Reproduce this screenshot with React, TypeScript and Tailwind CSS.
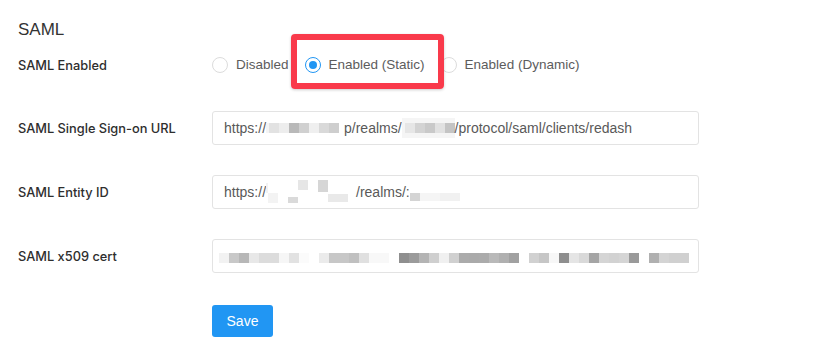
import React from "react";

type Block = { c: string };

// pixelated (redacted) parts of the field values
const urlMaskA: Block[] = [
  { c: "w-[3px] h-[10px] bg-[#f4f4f4]" },
  { c: "w-[10px] h-[10px] bg-[#e2e2e2]" },
  { c: "w-[10px] h-[10px] bg-[#ededed]" },
  { c: "w-[10px] h-[10px] bg-[#b9b9b9]" },
  { c: "w-[10px] h-[10px] bg-[#d0d0d0]" },
  { c: "w-[10px] h-[10px] bg-[#efefef]" },
  { c: "w-[10px] h-[10px] bg-[#d9d9d9]" },
  { c: "w-[10px] h-[10px] bg-[#cecece]" },
  { c: "w-[5px] h-[10px] bg-white" },
];

const urlMaskB: Block[] = [
  { c: "w-[3px] h-[10px] bg-[#f5f5f5]" },
  { c: "w-[10px] h-[10px] bg-[#e6e6e6]" },
  { c: "w-[10px] h-[10px] bg-[#d3d3d3]" },
  { c: "w-[10px] h-[10px] bg-[#c9c9c9]" },
  { c: "w-[10px] h-[10px] bg-[#e1e1e1]" },
  { c: "w-[10px] h-[10px] bg-[#c4c4c4]" },
];

const entityMaskA: Block[] = [
  { c: "w-[2px] h-[10px] mt-[4px] bg-[#f2f2f2]" },
  { c: "w-[10px] h-[10px] mt-[14px] bg-[#f3f3f3]" },
  { c: "w-[10px] h-[10px] bg-white" },
  { c: "w-[10px] h-[6px] mt-[18px] bg-[#dadada]" },
  { c: "w-[10px] h-[10px] mt-[1px] bg-[#e6e6e6]" },
  { c: "w-[10px] h-[10px] bg-white" },
  { c: "w-[10px] h-[12px] mt-[1px] bg-[#d6d6d6]" },
  { c: "w-[20px] h-[8px] mt-[15px] bg-[#e9e9e9]" },
  { c: "w-[8px] h-[10px] bg-white" },
];

const entityMaskB: Block[] = [
  { c: "w-[10px] h-[8px] mt-[14px] bg-[#d4d4d4]" },
  { c: "w-[20px] h-[8px] mt-[14px] bg-[#f5f5f5]" },
  { c: "w-[20px] h-[8px] mt-[14px] bg-[#f1f1f1]" },
];

const certMask: string[] = [
  "bg-[#f2f2f2]", "bg-[#c8c8c8]", "bg-[#b7b7b7]", "bg-[#e8e8e8]", "bg-[#dcdcdc]",
  "bg-[#dcdcdc]", "bg-[#f6f6f6]", "bg-[#e2e2e2]", "bg-[#fbfbfb]", "bg-white",
  "bg-[#ebebeb]", "bg-[#c7c7c7]", "bg-[#c7c7c7]", "bg-[#c0c0c0]", "bg-[#e0e0e0]",
  "bg-[#f8f8f8]", "bg-[#f8f8f8]", "bg-white", "bg-[#8f8f8f]", "bg-[#9b9b9b]",
  "bg-[#b4b4b4]", "bg-[#cfcfcf]", "bg-[#f0f0f0]", "bg-[#d0d0d0]", "bg-[#ababab]",
  "bg-[#aaaaaa]", "bg-[#ababab]", "bg-[#b9b9b9]", "bg-[#b0b0b0]", "bg-[#a1a1a1]",
  "bg-white", "bg-[#d1d1d1]", "bg-[#c6c6c6]", "bg-[#f7f7f7]", "bg-[#8e8e8e]",
  "bg-[#e5e5e5]", "bg-[#d9d9d9]", "bg-[#a5a5a5]", "bg-[#d5d5d5]", "bg-[#d2d2d2]",
  "bg-[#d5d5d5]", "bg-[#9a9a9a]", "bg-white", "bg-[#b0b0b0]", "bg-[#d4d4d4]",
  "bg-[#d0d0d0]", "bg-[#d0d0d0]",
];

function Mask({ blocks, className = "" }: { blocks: Block[]; className?: string }) {
  return (
    <span className={`inline-flex items-start shrink-0 ${className}`}>
      {blocks.map((b, i) => (
        <span key={i} className={`block shrink-0 ${b.c}`} />
      ))}
    </span>
  );
}

function Radio({ label, checked }: { label: string; checked?: boolean }) {
  return (
    <label className="flex items-center mr-[8px]">
      <span
        className={`w-4 h-4 rounded-full border bg-white flex items-center justify-center ${
          checked ? "border-[#2196f3]" : "border-[#dcdcdc]"
        }`}
      >
        {checked && <span className="w-2 h-2 rounded-full bg-[#2196f3]" />}
      </span>
      <span className="px-[8px] text-[13.5px] text-[#5c5c5c]">{label}</span>
    </label>
  );
}

function Row({ label, children, className = "" }: { label: string; children: React.ReactNode; className?: string }) {
  return (
    <div className={`flex items-center h-[34px] ${className}`}>
      <div className="w-[194px] shrink-0 pt-[2px] font-['Inter',sans-serif] font-medium text-[12.8px] text-[#2e2e2e]">
        {label}
      </div>
      {children}
    </div>
  );
}

function Field({ children, className = "pl-[11px]" }: { children: React.ReactNode; className?: string }) {
  return (
    <div
      className={`w-[487px] h-[34px] border border-[#e3e3e3] rounded-[3px] flex items-center overflow-hidden whitespace-nowrap text-[14px] text-[#595959] ${className}`}
    >
      {children}
    </div>
  );
}

export default function App() {
  return (
    <div className="w-[820px] h-[362px] bg-white relative overflow-hidden font-['Liberation_Sans',Arial,sans-serif]">
      <div className="pl-[18px] pt-[18px]">
        <h2 className="text-[17px] leading-[24px] text-[#333]">SAML</h2>

        <div className="mt-[6px] flex flex-col">
          <Row label="SAML Enabled">
            <div className="flex items-center">
              <Radio label="Disabled" />
              <Radio label="Enabled (Static)" checked />
              <Radio label="Enabled (Dynamic)" />
            </div>
          </Row>

          <Row label="SAML Single Sign-on URL" className="mt-[29px]">
            <Field>
              <span>https://</span>
              <Mask blocks={urlMaskA} className="mt-[-1px]" />
              <span>p/realms/</span>
              <span className="inline-flex bg-[#f5f5f5] py-[5px]">
                <Mask blocks={urlMaskB} />
              </span>
              <span>/protocol/saml/clients/redash</span>
            </Field>
          </Row>

          <Row label="SAML Entity ID" className="mt-[30px]">
            <Field>
              <span>https://</span>
              <span className="h-[26px] flex">
                <Mask blocks={entityMaskA} />
              </span>
              <span>/realms/:</span>
              <span className="h-[26px] flex">
                <Mask blocks={entityMaskB} />
              </span>
            </Field>
          </Row>

          <Row label="SAML x509 cert" className="mt-[30px]">
            <Field className="pl-[6px]">
              <span className="inline-flex mt-[3px]">
                {certMask.map((c, i) => (
                  <span key={i} className={`block w-[10px] h-[10px] shrink-0 ${c}`} />
                ))}
              </span>
            </Field>
          </Row>

          <div className="mt-[32px] ml-[194px]">
            <button className="w-[61px] h-[32px] rounded-[3px] bg-[#2196f3] text-white text-[14px] flex items-center justify-center">
              Save
            </button>
          </div>
        </div>
      </div>

      {/* annotation box */}
      <div className="absolute left-[291px] top-[34px] w-[153px] h-[55px] border-[6px] border-[#f93a4b] rounded-[4px] shadow-[0_1px_3px_rgba(0,0,0,0.2)]" />
    </div>
  );
}
